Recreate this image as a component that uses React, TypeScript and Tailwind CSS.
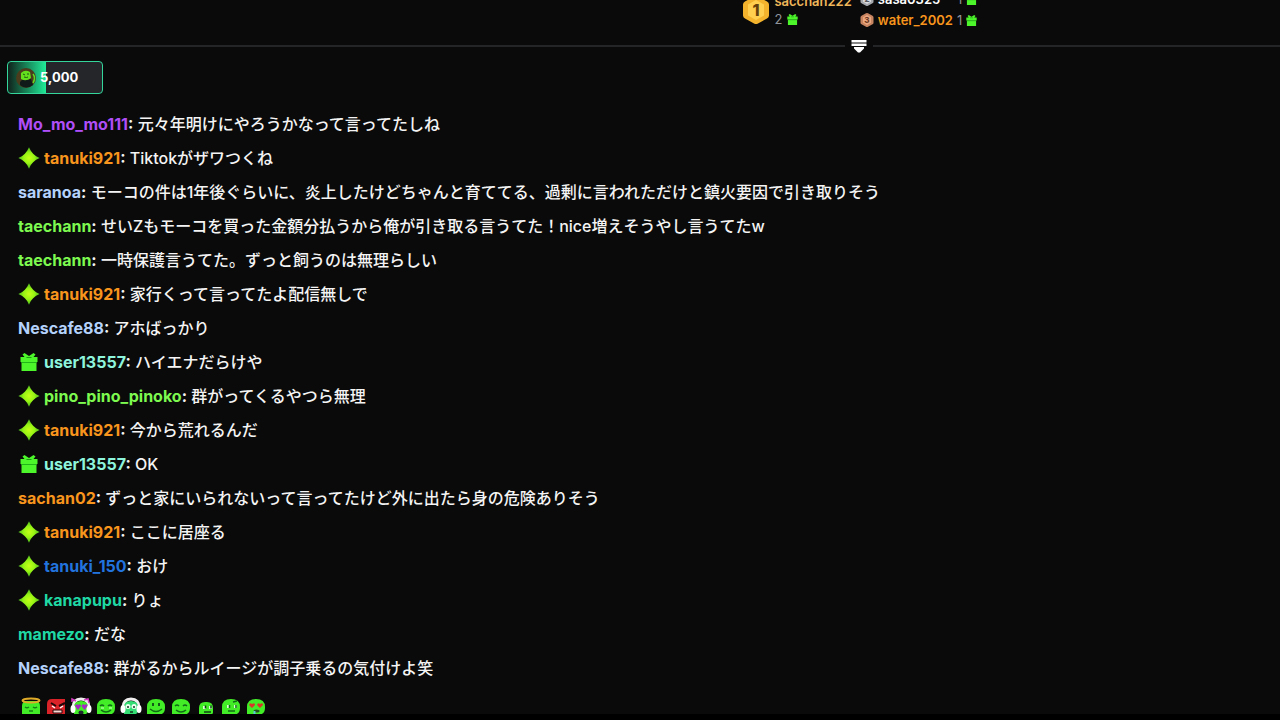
import React from "react";

type Badge = "spark" | "gift";
type Message = { user: string; color: string; text: string; badge?: Badge };

const messages: Message[] = [
  { user: "Mo_mo_mo111", color: "text-[#b04ef8]", text: "元々年明けにやろうかなって言ってたしね" },
  { user: "tanuki921", color: "text-[#f8951d]", text: "Tiktokがザワつくね", badge: "spark" },
  { user: "saranoa", color: "text-[#b4d2fb]", text: "モーコの件は1年後ぐらいに、炎上したけどちゃんと育ててる、過剰に言われただけと鎮火要因で引き取りそう" },
  { user: "taechann", color: "text-[#7df94f]", text: "せいZもモーコを買った金額分払うから俺が引き取る言うてた！nice増えそうやし言うてたw" },
  { user: "taechann", color: "text-[#7df94f]", text: "一時保護言うてた。ずっと飼うのは無理らしい" },
  { user: "tanuki921", color: "text-[#f8951d]", text: "家行くって言ってたよ配信無しで", badge: "spark" },
  { user: "Nescafe88", color: "text-[#b4d2fb]", text: "アホばっかり" },
  { user: "user13557", color: "text-[#8ef5dd]", text: "ハイエナだらけや", badge: "gift" },
  { user: "pino_pino_pinoko", color: "text-[#7df94f]", text: "群がってくるやつら無理", badge: "spark" },
  { user: "tanuki921", color: "text-[#f8951d]", text: "今から荒れるんだ", badge: "spark" },
  { user: "user13557", color: "text-[#8ef5dd]", text: "OK", badge: "gift" },
  { user: "sachan02", color: "text-[#f8951d]", text: "ずっと家にいられないって言ってたけど外に出たら身の危険ありそう" },
  { user: "tanuki921", color: "text-[#f8951d]", text: "ここに居座る", badge: "spark" },
  { user: "tanuki_150", color: "text-[#2273dd]", text: "おけ", badge: "spark" },
  { user: "kanapupu", color: "text-[#1fd8a4]", text: "りょ", badge: "spark" },
  { user: "mamezo", color: "text-[#1fd8a4]", text: "だな" },
  { user: "Nescafe88", color: "text-[#b4d2fb]", text: "群がるからルイージが調子乗るの気付けよ笑" },
];

function Spark() {
  return (
    <svg viewBox="0 0 22 22" className="size-[22px] shrink-0" aria-hidden="true">
      <defs>
        <radialGradient id="spark">
          <stop offset="0" stopColor="#c4ff18" />
          <stop offset="0.5" stopColor="#98f414" />
          <stop offset="1" stopColor="#46b51c" />
        </radialGradient>
      </defs>
      <path d="M11 .3C13 5.500 16.500 9 21.700 11C16.500 13 13 16.500 11 21.700C9 16.500 5.500 13 .3 11C5.500 9 9 5.500 11 .3Z" fill="url(#spark)" />
    </svg>
  );
}

function Gift({ className }: { className: string }) {
  return (
    <svg viewBox="0 0 18 18" className={className} aria-hidden="true">
      <path d="M.5 4h4L2.500 1.500 4.500 0 9 3l4.500-3 2 1.500L13.500 4h4v5H.5Z" fill="#4df52b" />
      <path d="M1.500 9h15v9h-15Z" fill="#4df52b" />
      <path d="M6.500 4.500h5" stroke="#1c9b14" strokeWidth="1" />
      <path d="M1.500 9.500h15" stroke="#22b51a" strokeWidth="1" />
    </svg>
  );
}

function Medal({ rank, outer, inner, ink, className }: { rank: number; outer: string; inner: string; ink: string; className: string }) {
  return (
    <svg viewBox="0 0 28 30" className={className} role="img" aria-label={`Rank ${rank}`}>
      <path d="M12 1.500q2-1 4 0l9 5q2 1 2 3v11q0 2-2 3l-9 5q-2 1-4 0l-9-5q-2-1-2-3v-11q0-2 2-3Z" fill={outer} />
      <path d="M14 5l8 4.500v11L14 25l-8-4.500v-11Z" fill={inner} />
      <text x="14" y="20.500" textAnchor="middle" fontFamily="Inter, sans-serif" fontSize="16" fontWeight="800" fill={ink}>{rank}</text>
    </svg>
  );
}

type Face = "angel" | "angry" | "love" | "smirk" | "music" | "smile" | "happy" | "small" | "think" | "drool";
const faces: Face[] = ["angel", "angry", "love", "smirk", "music", "smile", "happy", "small", "think", "drool"];

function Emote({ face }: { face: Face }) {
  const headset = face === "love" || face === "music";
  const skin = face === "angry" ? "#d92328" : face === "music" ? "#35dd75" : "#42ed27";
  const body =
    face === "small"
      ? "M4 18V11q0-6 6-6h2q6 0 6 6v4q0 3-4 3Z"
      : face === "angel"
        ? "M2 22V9q0-5 5-5h8q5 0 5 5v13Z"
        : face === "angry"
          ? "M2 22V7q0-5 5-5h13v20h-4l-1-3-2 3Z"
          : "M2 18V10Q2 2 11 2q9 0 9 8v1q0 7-8 7Z";
  return (
    <svg viewBox="0 0 22 22" className="size-[22px] shrink-0" role="img" aria-label={face}>
      {headset && <path d="M3 11Q3 2 11 2t8 9" fill="none" stroke="#f1eeef" strokeWidth="3" />}
      <path d={headset ? "M4 18V10q0-6 7-6t7 6v3q0 5-6 5Z" : body} fill={skin} />
      {face === "angel" && (
        <>
          <ellipse cx="11" cy="3.500" rx="8.500" ry="2" fill="none" stroke="#dfab28" strokeWidth="2" />
          <path d="M5 10q2 1.500 4 0M13 10q2 1.500 4 0M9 14h4" fill="none" stroke="#167d17" strokeWidth="1.500" />
        </>
      )}
      {face === "angry" && (
        <>
          <path d="M6 6l5 3M20 6l-6 3" stroke="#200608" strokeWidth="2" />
          <path d="M7 9l3 2M18 9l-3 2" stroke="#fff" strokeWidth="1.500" />
          <path d="M8 16v-3h9v3Z" fill="#f8d7d3" stroke="#290708" />
        </>
      )}
      {headset && (
        <>
          <ellipse cx="3" cy="12" rx="2.500" ry="4" fill="#fff" />
          <ellipse cx="19" cy="12" rx="2.500" ry="4" fill="#fff" />
        </>
      )}
      {face === "love" && (
        <>
          <path d="M2 5V2l4 2M14 3l4-1 1 4" stroke="#d83cc7" strokeWidth="1.500" fill="none" />
          <path d="M8 13L5 9q1-3 3-1 2.500-2 3 1ZM14.500 13l-3-4q1-3 3-1 2.500-2 3 1Z" fill="#a727c5" />
          <ellipse cx="11" cy="15.500" rx="2.500" ry="2" fill="#202530" />
        </>
      )}
      {face === "music" && (
        <>
          <ellipse cx="8" cy="9.500" rx="2.500" ry="2.500" fill="#eafff0" />
          <ellipse cx="14" cy="9.500" rx="2.500" ry="2.500" fill="#eafff0" />
          <path d="M8 9v2M14 9v2M10 15h3" stroke="#143620" strokeWidth="1.500" />
        </>
      )}
      {(face === "smirk" || face === "happy") && (
        <path d="M5 9q2-2 4 0M13 9q2-2 4 0M6 13q5 4 10 0" fill="none" stroke="#116817" strokeWidth="1.500" />
      )}
      {face === "smirk" && <path d="M6 11h3M14 11h3" stroke="#d4ffca" />}
      {face === "smile" && (
        <>
          <path d="M8 6v3M14 6v3" stroke="#125817" strokeWidth="2" />
          <path d="M5 12q6 5 12 0" fill="none" stroke="#116817" strokeWidth="1.500" />
        </>
      )}
      {face === "small" && (
        <>
          <path d="M8 9h3v3H8ZM14 9h3v3h-3Z" fill="#d9ffd1" />
          <path d="M10.500 8.500v3M16 8.500v3M9 15h7" stroke="#103e16" strokeWidth="1.500" />
        </>
      )}
      {face === "think" && (
        <>
          <path d="M7 8h3v3H7ZM14 8h3v3h-3Z" fill="#d9ffd1" />
          <path d="M9.500 8v3M16 8v3M13 5l4-1M8 14h7" stroke="#116817" strokeWidth="1.500" />
        </>
      )}
      {face === "drool" && (
        <>
          <path d="M7 11L4 8q1-3 3-1 3-2 3 1ZM15 11l-3-3q1-3 3-1 3-2 3 1Z" fill="#d9352b" />
          <ellipse cx="11.500" cy="14" rx="3" ry="1.500" fill="#245021" />
          <path d="M9.500 14v4" stroke="#58cbd8" strokeWidth="2" />
        </>
      )}
    </svg>
  );
}

export default function App() {
  return (
    <div className="flex h-screen flex-col overflow-hidden border-b-[6px] border-black bg-[#0a0a0a] font-['Inter','Noto_Sans_CJK_JP',sans-serif] text-[#f4f4f4]">
      <header className="shrink-0">
        <div className="flex h-[30px] items-end gap-2 overflow-hidden pl-[58%] text-[13px] leading-5">
          <div className="flex items-center gap-1 pb-0.5">
            <Medal rank={1} outer="#f3b32c" inner="#ffcf50" ink="#65400b" className="h-[30px] w-[28px]" />
            <div>
              <p className="font-semibold leading-[18px] text-[#f0b75a]">sacchan222</p>
              <p className="flex items-center gap-[5px] leading-[18px] text-[#8f949b]">
                2 <Gift className="size-[11px]" />
              </p>
            </div>
          </div>
          <ol className="flex flex-col gap-px">
            <li className="flex items-center gap-1">
              <Medal rank={2} outer="#a5a8ad" inner="#d7d9dc" ink="#55585d" className="h-4 w-[14px]" />
              <span className="font-semibold text-white">sasa0325</span>
              <span className="ml-auto text-[#8f949b]">1</span>
              <Gift className="size-[11px]" />
            </li>
            <li className="flex items-center gap-1">
              <Medal rank={3} outer="#c78460" inner="#eba880" ink="#6b3a22" className="h-4 w-[14px]" />
              <span className="font-semibold text-[#f8951d]">water_2002</span>
              <span className="text-[#8f949b]">1</span>
              <Gift className="size-[11px]" />
            </li>
          </ol>
        </div>
        <div className="flex h-[31px] items-center">
          <div className="h-0.5 w-[66%] bg-[#242526]" />
          <button type="button" aria-label="Collapse leaderboard" className="flex w-7 items-center justify-center">
            <svg viewBox="0 0 16 14" className="h-[14px] w-4" fill="#fff" aria-hidden="true">
              <path d="M.5 1h15v2.500H.5ZM.5 4.500h15V7H.5ZM3 8h10v1.500L9 13.500H7L3 9.500Z" />
            </svg>
          </button>
          <div className="h-0.5 flex-1 bg-[#242526]" />
        </div>
      </header>

      <div className="shrink-0 pl-[7px]">
        <button
          type="button"
          className="flex h-[33px] w-24 items-center gap-1 rounded-[4px] border border-[#35d69c] bg-[linear-gradient(90deg,#10221c_0px,#20eb98_38px,#24262a_38px)] pl-2 text-[13px] font-bold text-white"
        >
          <svg viewBox="0 0 20 20" className="size-5" aria-hidden="true">
            <circle cx="10" cy="10" r="10" fill="#4a3c1c" />
            <path d="M4 14q3-4 6-2l5-1 2 6q-7 5-13 0Z" fill="#101a18" />
            <path d="M5 5q4-4 9-1l1 6q-5 4-10 1Z" fill="#63df1d" />
            <path d="M7 6l2 1M11 6h2M8 9q3 1 4 0" stroke="#1b5712" fill="none" />
            <path d="M17 6q3 4 0 9" stroke="#62da22" strokeWidth="1.500" fill="none" />
          </svg>
          5,000
        </button>
      </div>

      <main className="mt-[13px] min-h-0 flex-1 overflow-hidden px-[18px]">
        <ul>
          {messages.map((m, i) => (
            <li key={i} className="flex h-[34px] items-center text-base leading-6">
              {m.badge && (
                <span className="mr-1 flex w-[22px] shrink-0 justify-center">
                  {m.badge === "spark" ? <Spark /> : <Gift className="size-[18px]" />}
                </span>
              )}
              <p className="font-medium">
                <span className={`font-bold ${m.color}`}>{m.user}</span>
                <span className="font-bold">:</span> {m.text}
              </p>
            </li>
          ))}
          <li className="flex gap-[3px] pl-0.5 pt-3">
            {faces.map((f) => (
              <Emote key={f} face={f} />
            ))}
          </li>
        </ul>
      </main>
    </div>
  );
}
